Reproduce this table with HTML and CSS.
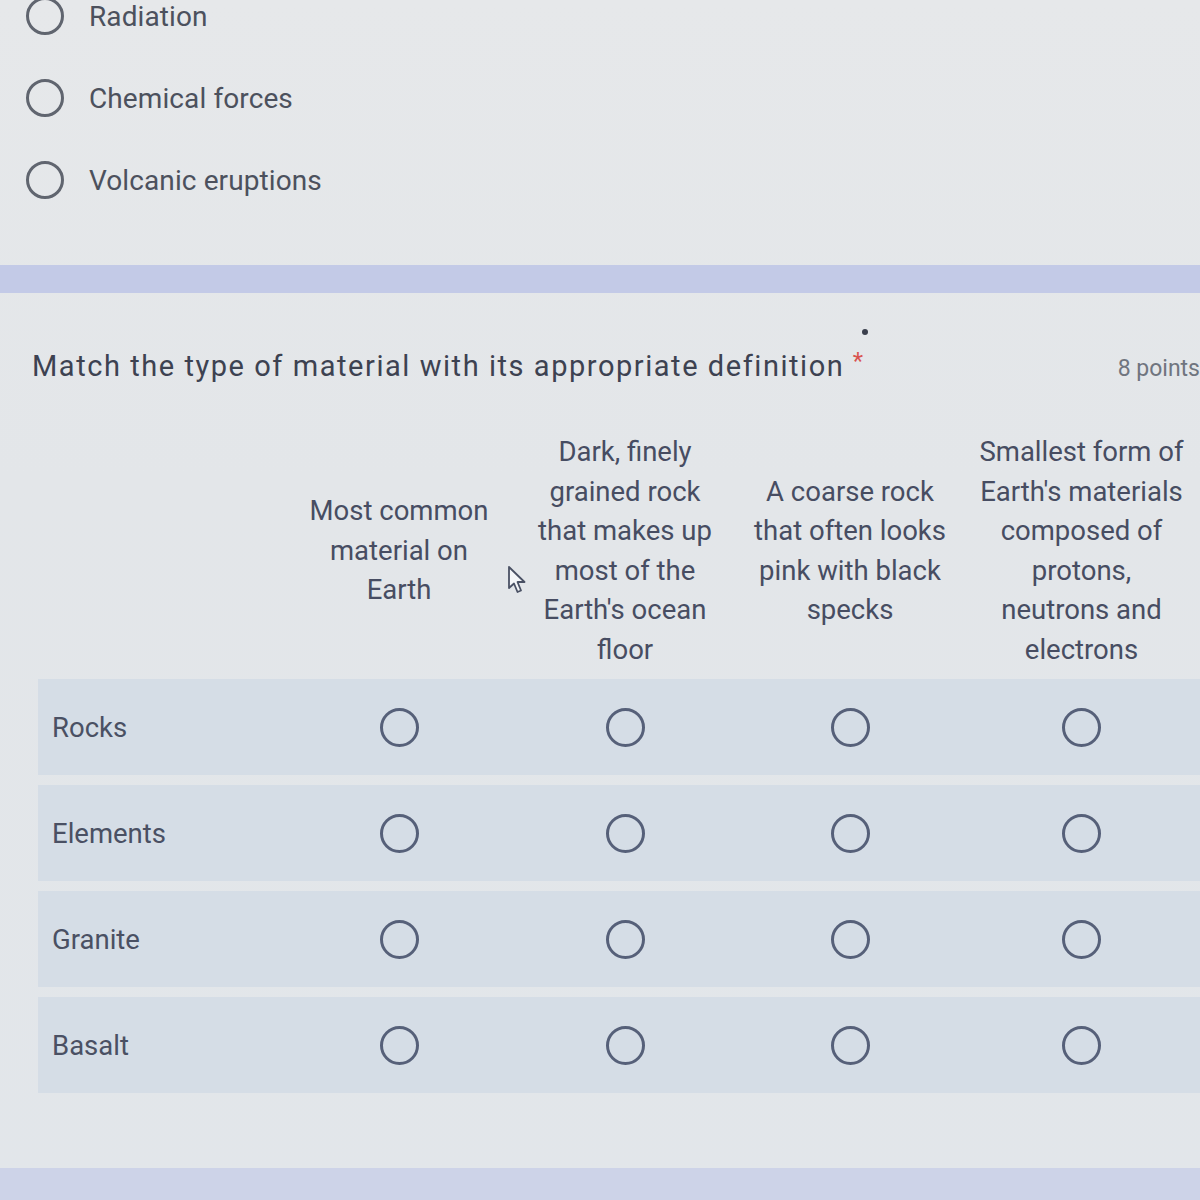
FILE: index.html
```html
<!DOCTYPE html>
<html lang="en">
<head>
<meta charset="utf-8">
<title>Match the type of material</title>
<link rel="stylesheet" href="styles.css">
</head>
<body>
<div class="page">
  <section class="options">
    <div class="option"><span class="radio radio-opt"></span><span class="opt-text">Radiation</span></div>
    <div class="option"><span class="radio radio-opt"></span><span class="opt-text">Chemical forces</span></div>
    <div class="option"><span class="radio radio-opt"></span><span class="opt-text">Volcanic eruptions</span></div>
  </section>

  <div class="band"></div>

  <section class="question">
    <span class="dot"></span>
    <div class="qhead">
      <span class="qtitle"><span class="qtext">Match the type of material with its appropriate definition</span><span class="req">*</span></span>
      <span class="points">8 points</span>
    </div>

    <div class="grid">
      <svg class="cursor" width="22" height="30" viewBox="0 0 22 30">
        <path d="M2 2 L2 23 L7 18.5 L10.5 27 L14 25.5 L10.5 17 L17.5 17 Z" fill="#f4f6f8" stroke="#4a5164" stroke-width="1.8" stroke-linejoin="round"/>
      </svg>
      <div class="grow head">
        <div class="cell"></div>
        <div class="cell hcell">Most common<br>material on<br>Earth</div>
        <div class="cell hcell">Dark, finely<br>grained rock<br>that makes up<br>most of the<br>Earth's ocean<br>floor</div>
        <div class="cell hcell">A coarse rock<br>that often looks<br>pink with black<br>specks</div>
        <div class="cell hcell">Smallest form of<br>Earth's materials<br>composed of<br>protons,<br>neutrons and<br>electrons</div>
      </div>

      <div class="grow row">
        <div class="cell label">Rocks</div>
        <div class="cell"><span class="radio"></span></div>
        <div class="cell"><span class="radio"></span></div>
        <div class="cell"><span class="radio"></span></div>
        <div class="cell"><span class="radio"></span></div>
      </div>
      <div class="grow row">
        <div class="cell label">Elements</div>
        <div class="cell"><span class="radio"></span></div>
        <div class="cell"><span class="radio"></span></div>
        <div class="cell"><span class="radio"></span></div>
        <div class="cell"><span class="radio"></span></div>
      </div>
      <div class="grow row">
        <div class="cell label">Granite</div>
        <div class="cell"><span class="radio"></span></div>
        <div class="cell"><span class="radio"></span></div>
        <div class="cell"><span class="radio"></span></div>
        <div class="cell"><span class="radio"></span></div>
      </div>
      <div class="grow row">
        <div class="cell label">Basalt</div>
        <div class="cell"><span class="radio"></span></div>
        <div class="cell"><span class="radio"></span></div>
        <div class="cell"><span class="radio"></span></div>
        <div class="cell"><span class="radio"></span></div>
      </div>
    </div>
  </section>

  <div class="band band-bottom"></div>
</div>
</body>
</html>
```

FILE: styles.css
```css
html, body {
  margin: 0;
  padding: 0;
}

body {
  background: #e4e7ea;
  font-family: Roboto, "Liberation Sans", Arial, sans-serif;
  overflow: hidden;
}

.page {
  width: 1200px;
  height: 1200px;
  overflow: hidden;
  background: linear-gradient(180deg, #e6e8ea 0%, #e3e6e9 40%, #e2e6ea 100%);
}

.options {
  margin-top: -25px;
  padding-left: 26px;
}

.option {
  height: 82px;
  display: flex;
  align-items: center;
  gap: 25px;
}

.radio {
  display: inline-block;
  width: 33px;
  height: 33px;
  border: 3px solid #566079;
  border-radius: 50%;
  box-sizing: content-box;
}

.radio-opt {
  width: 32px;
  height: 32px;
  border-color: #60656f;
}

.opt-text {
  font-size: 28px;
  color: #4c515d;
  letter-spacing: 0.1px;
}

.band {
  margin-top: 44px;
  height: 28px;
  background: #c3cae7;
}

.band-bottom {
  margin-top: 75px;
  height: 40px;
  background: #cdd3e8;
}

.question {
  position: relative;
  padding-top: 53px;
}

.dot {
  position: absolute;
  left: 862px;
  top: 36px;
  width: 6px;
  height: 6px;
  border-radius: 50%;
  background: #3a3f4c;
}

.qhead {
  display: flex;
  align-items: baseline;
  justify-content: space-between;
  padding-left: 32px;
  line-height: 40px;
}

.qtitle {
  display: flex;
  align-items: flex-start;
  gap: 10px;
}

.qtext {
  font-size: 29px;
  color: #3d4251;
  letter-spacing: 1.55px;
  margin-right: -1.55px;
}

.req {
  color: #d9534f;
  font-size: 24px;
  line-height: 30px;
}

.points {
  font-size: 23px;
  color: #70757f;
  white-space: nowrap;
}

.grid {
  position: relative;
  margin-top: 40px;
  margin-left: 38px;
  display: flex;
  flex-direction: column;
  gap: 10px;
}

.cursor {
  position: absolute;
  left: 469px;
  top: 136px;
}

.grow {
  display: grid;
  grid-template-columns: 247px 228px 224px 226px 237px;
}

.head {
  min-height: 243px;
  margin-bottom: -3px;
}

.hcell {
  display: flex;
  align-items: center;
  justify-content: center;
  text-align: center;
  font-size: 27.5px;
  line-height: 39.5px;
  color: #474d62;
}

.row {
  height: 96px;
  background: #d5dde6;
}

.row .cell {
  display: flex;
  align-items: center;
  justify-content: center;
}

.row .label {
  justify-content: flex-start;
  padding-left: 14px;
  font-size: 27.5px;
  color: #4a5063;
}
```
